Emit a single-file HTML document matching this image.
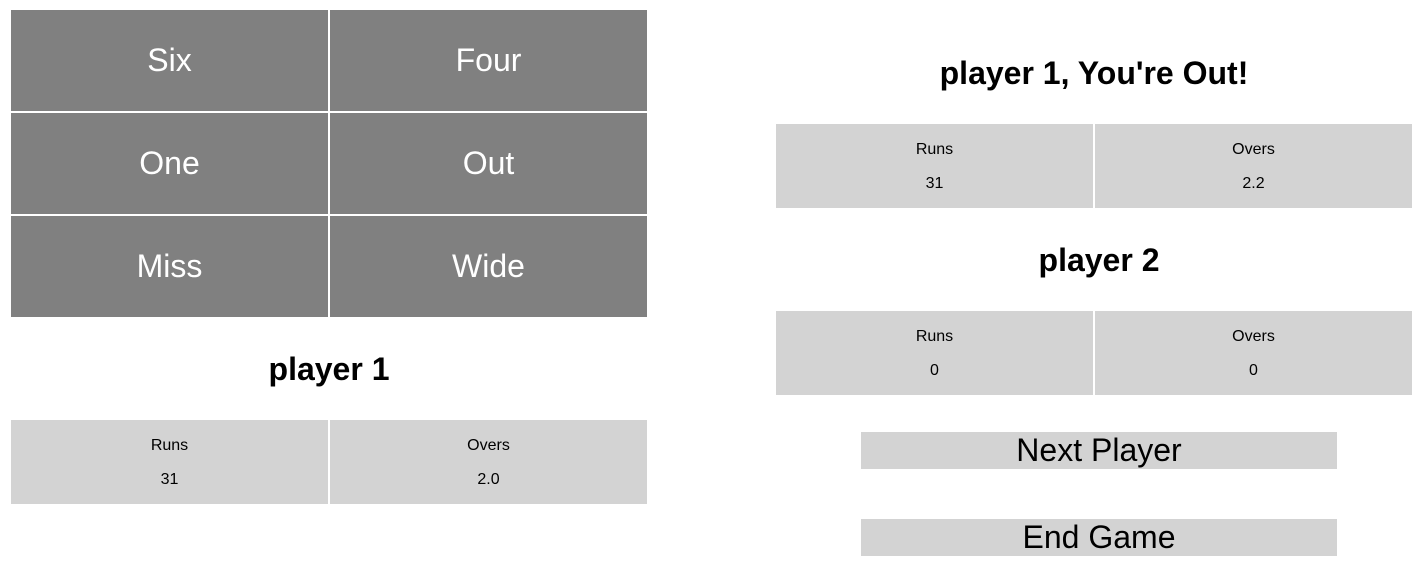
<!DOCTYPE html>
<html><head><style>
body{margin:0;width:1424px;height:568px;background:#fff;font-family:"Liberation Sans",Arial,sans-serif;position:relative;overflow:hidden}
.a{position:absolute;box-sizing:border-box}
.g{background:#808080;color:#fff;font-size:32px;display:flex;align-items:center;justify-content:center;width:317px;height:101px}
.c{background:#d3d3d3;color:#000;font-size:16px;width:317px;height:84px;text-align:center}
.c div{position:absolute;left:0;right:0}
.h{font-weight:bold;font-size:32px;text-align:center;line-height:34px}
.b{background:#d3d3d3;font-size:32px;text-align:center;width:476px;height:37px;line-height:37px;left:861px}
</style></head><body>
<div class="a g" style="left:11px;top:10px">Six</div>
<div class="a g" style="left:330px;top:10px">Four</div>
<div class="a g" style="left:11px;top:113px">One</div>
<div class="a g" style="left:330px;top:113px">Out</div>
<div class="a g" style="left:11px;top:216px">Miss</div>
<div class="a g" style="left:330px;top:216px">Wide</div>

<div class="a h" style="left:11px;width:636px;top:352px">player 1</div>
<div class="a c" style="left:11px;top:420px"><div style="top:17px">Runs</div><div style="top:51px">31</div></div>
<div class="a c" style="left:330px;top:420px"><div style="top:17px">Overs</div><div style="top:51px">2.0</div></div>

<div class="a h" style="left:776px;width:636px;top:56px">player 1, You're Out!</div>
<div class="a c" style="left:776px;top:124px"><div style="top:17px">Runs</div><div style="top:51px">31</div></div>
<div class="a c" style="left:1095px;top:124px"><div style="top:17px">Overs</div><div style="top:51px">2.2</div></div>

<div class="a h" style="left:776px;width:646px;top:243px">player 2</div>
<div class="a c" style="left:776px;top:311px"><div style="top:17px">Runs</div><div style="top:51px">0</div></div>
<div class="a c" style="left:1095px;top:311px"><div style="top:17px">Overs</div><div style="top:51px">0</div></div>

<div class="a b" style="top:432px">Next Player</div>
<div class="a b" style="top:519px">End Game</div>
</body></html>
